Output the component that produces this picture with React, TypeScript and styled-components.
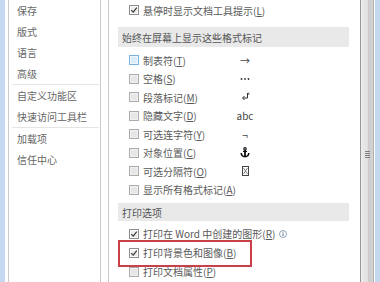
import styled, { createGlobalStyle } from "styled-components";

const GlobalStyle = createGlobalStyle`
  html, body {
    margin: 0;
    padding: 0;
    background: #fff;
  }
  body {
    font-family: "Noto Sans CJK SC", "Noto Sans", sans-serif;
  }
  #root {
    width: 380px;
    height: 282px;
    overflow: hidden;
  }
`;

const Window = styled.div`
  display: flex;
  width: 380px;
  height: 282px;
  overflow: hidden;
  background: #fff;
`;

const Edge = styled.div<{ $left?: boolean }>`
  flex: none;
  width: 5px;
  margin-right: ${(p) => (p.$left ? 3 : 0)}px;
  margin-left: ${(p) => (p.$left ? 0 : 1)}px;
  background: #c4d8ef;
`;

const Sidebar = styled.nav`
  flex: none;
  box-sizing: border-box;
  width: 93px;
  margin-right: 7px;
  border-left: 1px solid #cbcbcb;
  border-right: 1px solid #cbcbcb;
  display: flex;
  flex-direction: column;
`;

const NavItem = styled.div`
  height: 21px;
  display: flex;
  align-items: center;
  padding-left: 8px;
  font-size: 10px;
  color: #666;
  white-space: nowrap;
`;

const NavSep = styled.div`
  height: 1px;
  margin: 0 1px 0 3px;
  background: #e4e4e4;
`;

const Content = styled.main`
  flex: none;
  box-sizing: border-box;
  width: 252px;
  border-left: 1px solid #cbcbcb;
  display: flex;
  flex-direction: column;
`;

const SectionHead = styled.div<{ $h: number; $mt: number }>`
  margin: ${(p) => p.$mt}px 11px 0 9px;
  height: ${(p) => p.$h}px;
  display: flex;
  align-items: center;
  padding-left: 4px;
  background: #e9e9e9;
  font-size: 10px;
  color: #555;
  white-space: nowrap;
`;

const Rows = styled.div<{ $mt: number }>`
  display: flex;
  flex-direction: column;
  margin-top: ${(p) => p.$mt}px;
`;

const Row = styled.div<{ $h: number }>`
  position: relative;
  display: grid;
  grid-template-columns: 10px 91px 14px;
  column-gap: 4px;
  align-items: center;
  height: ${(p) => p.$h}px;
  padding-left: 20px;
  font-size: 10px;
  color: #595959;
  white-space: nowrap;
`;

const Label = styled.span`
  display: flex;
  align-items: center;
`;

const Key = styled.span`
  text-decoration: underline;
  text-underline-offset: 1px;
`;

const Symbol = styled.span`
  display: flex;
  align-items: center;
  justify-content: center;
  font-size: 10px;
  color: #444;
`;

const Check = styled.span<{ $state: "on" | "off" | "hot" }>`
  box-sizing: border-box;
  width: 10px;
  height: 10px;
  display: flex;
  align-items: center;
  justify-content: center;
  border: 1px solid
    ${(p) => (p.$state === "hot" ? "#7cb2dc" : p.$state === "on" ? "#8e8e8e" : "#ababab")};
  background: ${(p) =>
    p.$state === "hot"
      ? "#dcedf9"
      : p.$state === "on"
      ? "linear-gradient(#f6f6f6, #e4e4e4)"
      : "#e6e6e6"};
  box-shadow: inset 0 0 0 1px
    ${(p) => (p.$state === "hot" ? "#eef7fd" : p.$state === "on" ? "#fbfbfb" : "#f1f1f1")};
`;

const Highlight = styled.div`
  position: absolute;
  left: 9px;
  top: -3px;
  bottom: -5px;
  width: 134px;
  box-sizing: border-box;
  border: 2px solid #c9404a;
  pointer-events: none;
`;

const InfoIcon = styled.svg`
  margin-left: 4px;
  flex: none;
`;

const Scrollbar = styled.div`
  flex: none;
  box-sizing: border-box;
  width: 14px;
  border-left: 1px solid #989898;
  border-right: 1px solid #b0b0b0;
  background: linear-gradient(to right, #ececec 0%, #e0e0e0 55%, #cbcbcb 56%, #d4d4d4 100%);
  display: flex;
  justify-content: center;
  padding-top: 151px;
`;

const Grip = styled.div`
  width: 5px;
  height: 8px;
  background: repeating-linear-gradient(to bottom, #808080 0 1px, transparent 1px 2px);
`;

type State = "on" | "off" | "hot";

function Box({ state }: { state: State }) {
  return (
    <Check $state={state}>
      {state === "on" && (
        <svg width="8" height="8" viewBox="0 0 8 8">
          <path d="M1.3 4.2 L3.2 6.1 L6.8 1.6" fill="none" stroke="#3a3a3a" strokeWidth="1.2" />
        </svg>
      )}
    </Check>
  );
}

function Text({ text, k }: { text: string; k: string }) {
  return (
    <Label>
      {text}(<Key>{k}</Key>)
    </Label>
  );
}

const SpaceDots = () => (
  <svg width="10" height="4" viewBox="0 0 10 4">
    <circle cx="1.5" cy="2" r="0.9" fill="#333" />
    <circle cx="5" cy="2" r="0.9" fill="#333" />
    <circle cx="8.5" cy="2" r="0.9" fill="#333" />
  </svg>
);

const ParaMark = () => (
  <svg width="9" height="10" viewBox="0 0 9 10">
    <path d="M6.5 1 V6 H2" fill="none" stroke="#333" strokeWidth="1" />
    <path d="M3.5 4 L1.5 6 L3.5 8" fill="none" stroke="#333" strokeWidth="1" />
    <path d="M7.8 0.5 V3" stroke="#333" strokeWidth="0.8" />
  </svg>
);

const Anchor = () => (
  <svg width="10" height="11" viewBox="0 0 10 11">
    <circle cx="5" cy="1.8" r="1.2" fill="none" stroke="#111" strokeWidth="1.1" />
    <path d="M5 3 V9.6" stroke="#111" strokeWidth="1.8" />
    <path d="M3 4.4 H7" stroke="#111" strokeWidth="1.2" />
    <path d="M1.2 6 Q1.5 9.6 5 9.6 Q8.5 9.6 8.8 6" fill="none" stroke="#111" strokeWidth="1.6" />
  </svg>
);

const BreakMark = () => (
  <svg width="7" height="10" viewBox="0 0 7 10">
    <rect x="0.5" y="0.5" width="6" height="9" fill="none" stroke="#444" strokeWidth="1" />
    <path d="M1.5 2 L5.5 8 M5.5 2 L1.5 8" stroke="#666" strokeWidth="0.8" />
  </svg>
);

const marks: { text: string; k: string; state: State; sym: React.ReactNode }[] = [
  { text: "制表符", k: "T", state: "hot", sym: "→" },
  { text: "空格", k: "S", state: "off", sym: <SpaceDots /> },
  { text: "段落标记", k: "M", state: "off", sym: <ParaMark /> },
  { text: "隐藏文字", k: "D", state: "off", sym: "abc" },
  { text: "可选连字符", k: "Y", state: "off", sym: "¬" },
  { text: "对象位置", k: "C", state: "off", sym: <Anchor /> },
  { text: "可选分隔符", k: "O", state: "off", sym: <BreakMark /> },
  { text: "显示所有格式标记", k: "A", state: "off", sym: null },
];

export default function App() {
  return (
    <>
      <GlobalStyle />
      <Window>
        <Edge $left />
        <Sidebar>
          <NavItem>保存</NavItem>
          <NavItem>版式</NavItem>
          <NavItem>语言</NavItem>
          <NavItem>高级</NavItem>
          <NavSep />
          <NavItem>自定义功能区</NavItem>
          <NavItem>快速访问工具栏</NavItem>
          <NavSep />
          <NavItem>加载项</NavItem>
          <NavItem>信任中心</NavItem>
        </Sidebar>
        <Content>
          <Row $h={20}>
            <Box state="on" />
            <Text text="悬停时显示文档工具提示" k="L" />
          </Row>
          <SectionHead $h={20} $mt={7}>
            始终在屏幕上显示这些格式标记
          </SectionHead>
          <Rows $mt={4}>
            {marks.map((m) => (
              <Row $h={18.5} key={m.k}>
                <Box state={m.state} />
                <Text text={m.text} k={m.k} />
                <Symbol>{m.sym}</Symbol>
              </Row>
            ))}
          </Rows>
          <SectionHead $h={18} $mt={4}>
            打印选项
          </SectionHead>
          <Rows $mt={3}>
            <Row $h={19}>
              <Box state="on" />
              <Label>
                打印在 Word 中创建的图形(<Key>R</Key>)
                <InfoIcon width="8" height="8" viewBox="0 0 8 8">
                  <circle cx="4" cy="4" r="3.5" fill="none" stroke="#7a8ea8" strokeWidth="0.8" />
                  <path d="M4 3.3 V6" stroke="#5a6f8c" strokeWidth="1" />
                  <circle cx="4" cy="2.1" r="0.55" fill="#5a6f8c" />
                </InfoIcon>
              </Label>
            </Row>
            <Row $h={19}>
              <Box state="on" />
              <Text text="打印背景色和图像" k="B" />
              <Highlight />
            </Row>
            <Row $h={19}>
              <Box state="off" />
              <Text text="打印文档属性" k="P" />
            </Row>
          </Rows>
        </Content>
        <Scrollbar>
          <Grip />
        </Scrollbar>
        <Edge />
      </Window>
    </>
  );
}
